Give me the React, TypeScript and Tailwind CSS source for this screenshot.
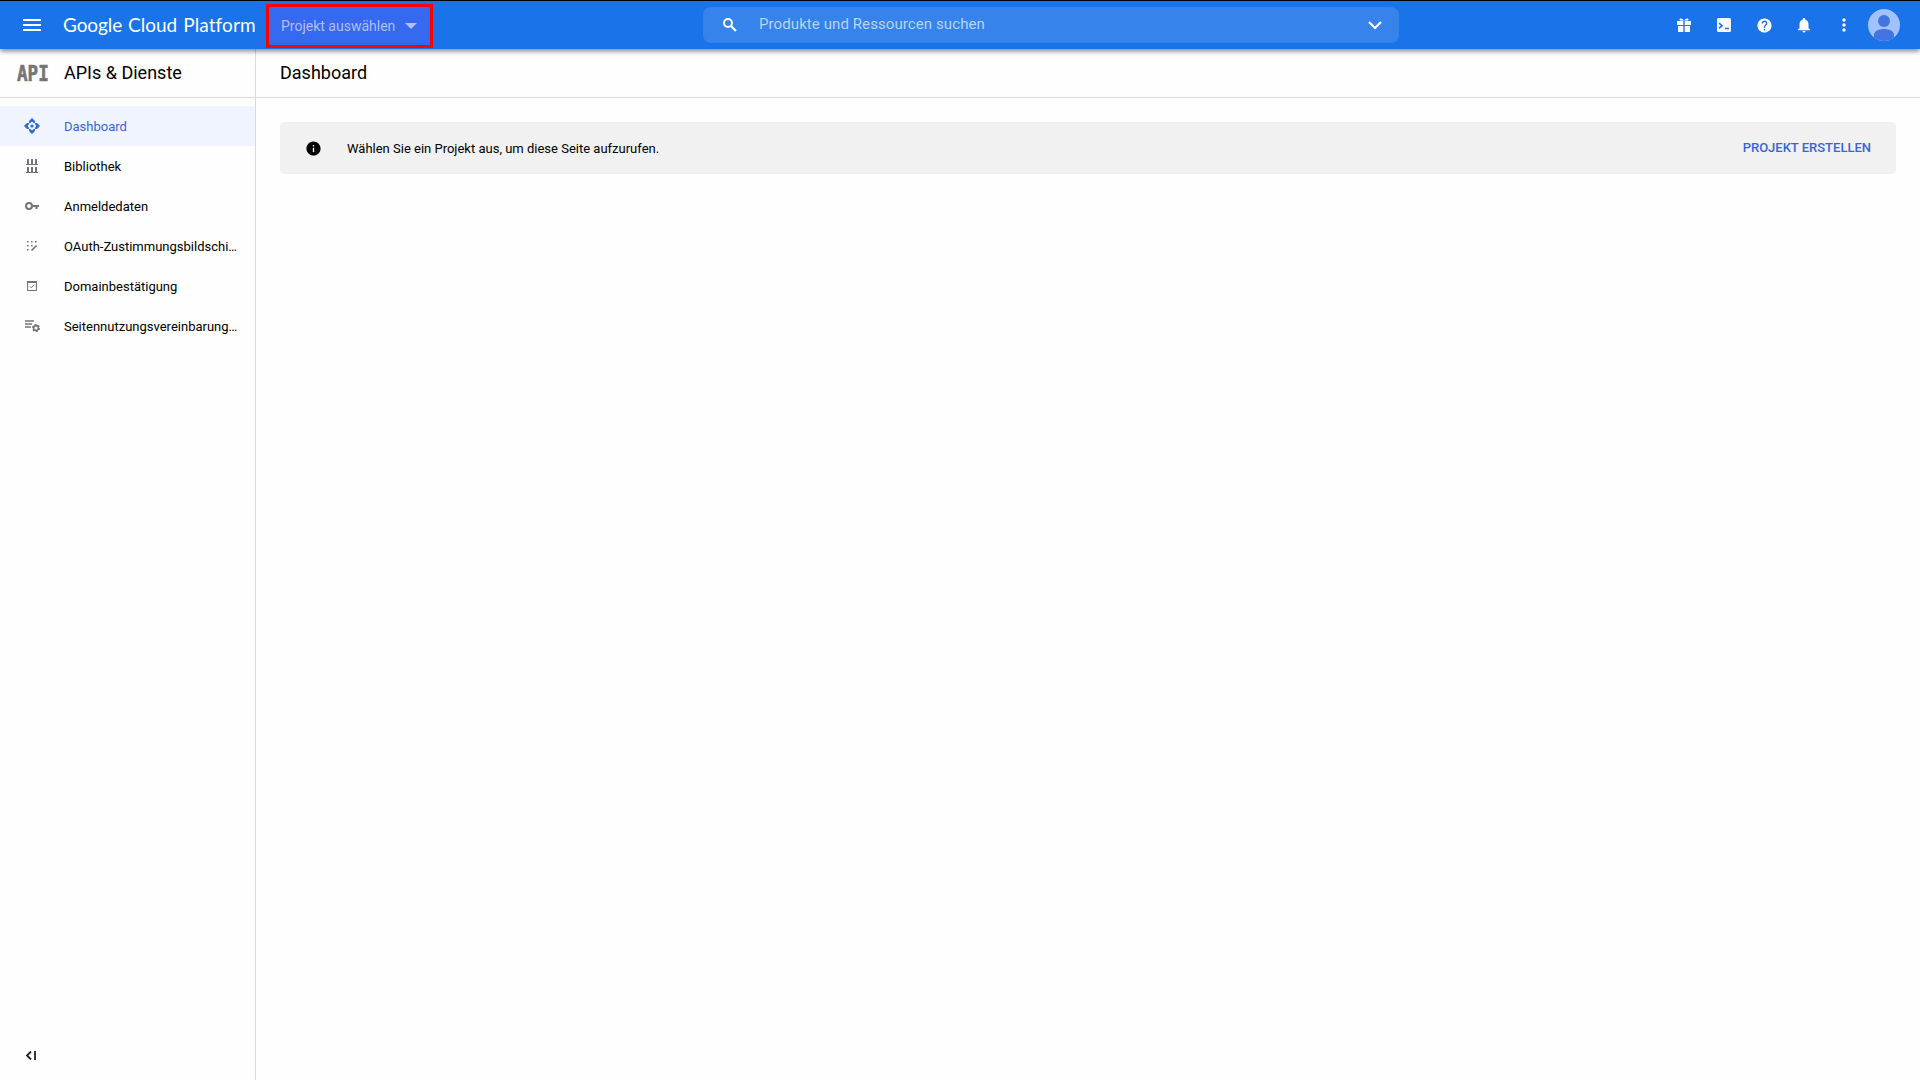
import type { ReactNode } from 'react'
import { MdHelp, MdInfo, MdMenu, MdMoreVert, MdNotifications } from 'react-icons/md'

type NavItem = { label: string; icon: ReactNode; active?: boolean }

function DashboardIcon() {
  return (
    <svg width="16" height="16" viewBox="0 0 16 16" fill="currentColor">
      <circle cx="8" cy="8" r="1.600" />
      <path d="M8 0l3 3v1.700L10 5.200 8 3.600 6 5.200 5 4.700V3zM8 16l3-3v-1.700l-1-.5L8 12.400l-2-1.600-1 .5V13zM0 8l3-3h1.700l.5 1L3.600 8l1.600 2-.5 1H3zM16 8l-3-3h-1.700l-.5 1 1.600 2-1.600 2 .5 1H13z" />
    </svg>
  )
}

function LibraryIcon() {
  return (
    <svg width="12" height="14" viewBox="0 0 12 14" fill="currentColor" shapeRendering="crispEdges">
      <path d="M1 0h2v5h2V0h2v5h2V0h2v5h1v1H0V5h1zM1 8h2v5h2V8h2v5h2V8h2v5h1v1H0v-1h1z" />
    </svg>
  )
}

function KeyIcon() {
  return (
    <svg width="14" height="8" viewBox="0 0 14 8" fill="none" stroke="currentColor" strokeWidth="2">
      <circle cx="4" cy="4" r="3" />
      <path d="M7 4h7M11.500 4v3" />
    </svg>
  )
}

function ConsentIcon() {
  return (
    <svg width="10" height="10" viewBox="0 0 10 10" fill="currentColor">
      <path d="M0 0h1.600v1.600H0zM4 0h1.600v1.600H4zM8 0h1.600v1.600H8zM0 4h1.600v1.600H0zM4 4h1.600v1.600H4zM0 8h1.600v1.600H0z" />
      <path d="M4.500 9.500L9.500 4.500" stroke="currentColor" strokeWidth="1.600" />
    </svg>
  )
}

function DomainIcon() {
  return (
    <svg width="10" height="10" viewBox="0 0 10 10" fill="none" stroke="currentColor">
      <path d="M.5 1v8.500h9V1" strokeWidth="1.200" />
      <path d="M0 1h10" strokeWidth="2" />
      <path d="M2.800 5.300l1.500 1.500 3-3" />
    </svg>
  )
}

function AgreementIcon() {
  return (
    <svg width="15" height="12" viewBox="0 0 15 12" fill="none" stroke="currentColor">
      <path d="M0 1h9M0 4h7M0 7h6" strokeWidth="1.400" />
      <circle cx="11" cy="8" r="2.400" strokeWidth="1.600" />
      <circle cx="11" cy="8" r="3.500" strokeWidth="1.200" strokeDasharray="1.830 1.830" />
    </svg>
  )
}

function SearchIcon() {
  return (
    <svg width="14" height="14" viewBox="0 0 14 14" fill="none" stroke="currentColor" strokeWidth="2">
      <circle cx="5" cy="5" r="4" />
      <path d="M8 8l5 5" strokeWidth="2.200" />
    </svg>
  )
}

function GiftIcon() {
  return (
    <svg width="14" height="14" viewBox="0 0 14 14" fill="currentColor">
      <path d="M0 3h6.300v4H0zM7.700 3H14v4H7.700zM1 8h5.300v6H1zM7.700 8H13v6H7.700z" />
      <path d="M7 3C5.500 0 2.500 0 2.500 1.500S5 2.500 7 2.500s4.500.5 4.500-1S8.500 0 7 3z" />
    </svg>
  )
}

function ShellIcon() {
  return (
    <svg width="14" height="14" viewBox="0 0 14 14" fill="none">
      <rect width="14" height="14" rx="1.500" fill="white" />
      <path d="M2 5l3 2.700-3 2.700M8 10.500h4" stroke="#1a73e8" strokeWidth="1.600" />
    </svg>
  )
}

function Avatar() {
  return (
    <svg width="32" height="32" viewBox="0 0 32 32">
      <circle cx="16" cy="16" r="16" fill="#a0c3ff" />
      <circle cx="16" cy="12" r="6" fill="#4374e0" />
      <path d="M6 28.500V26c0-4 5-6 10-6s10 2 10 6v2.500A16 16 0 0 1 6 28.500z" fill="#4374e0" />
    </svg>
  )
}

const navItems: NavItem[] = [
  { label: 'Dashboard', icon: <DashboardIcon />, active: true },
  { label: 'Bibliothek', icon: <LibraryIcon /> },
  { label: 'Anmeldedaten', icon: <KeyIcon /> },
  { label: 'OAuth-Zustimmungsbildschi…', icon: <ConsentIcon /> },
  { label: 'Domainbestätigung', icon: <DomainIcon /> },
  { label: 'Seitennutzungsvereinbarung…', icon: <AgreementIcon /> },
]

const actions = [
  { name: 'gift', icon: <GiftIcon /> },
  { name: 'shell', icon: <ShellIcon /> },
  { name: 'help', icon: <MdHelp size={17} /> },
  { name: 'notifications', icon: <MdNotifications size={18} /> },
  { name: 'more', icon: <MdMoreVert size={20} /> },
]

function Header() {
  return (
    <header className="relative z-10 flex h-[49px] items-center border-t border-black bg-[#1a73e8] text-white shadow-[0_2px_5px_rgba(0,0,0,0.5)]">
      <button type="button" className="flex w-16 justify-center">
        <MdMenu size={24} />
      </button>
      <div className="-ml-px flex w-[203px] gap-[6px] whitespace-nowrap font-['Lato',sans-serif] text-[19px] leading-6">
        <span className="tracking-[-0.1px]">Google</span>
        <span>Cloud</span>
        <span className="tracking-[0.1px]">Platform</span>
      </div>
      <div className="mt-[2px] h-11 w-[167px] border-[3px] border-[#ff0000]">
        <button
          type="button"
          className="flex h-9 w-full items-center rounded-[3px] bg-[#3569f0] pl-3 pt-[2px] text-sm text-[#b4bdfb]"
        >
          Projekt auswählen
          <svg width="12" height="6" viewBox="0 0 12 6" className="ml-[10px]" fill="currentColor">
            <path d="M0 0h12L6 6z" />
          </svg>
        </button>
      </div>
      <div className="ml-[270px] flex h-9 w-[696px] items-center rounded-lg bg-[#3583eb] pl-5 pr-[17px]">
        <SearchIcon />
        <span className="ml-[22px] flex-1 pb-[2px] text-[15px] tracking-[0.09px] text-[#b8d3f8]">
          Produkte und Ressourcen suchen
        </span>
        <svg width="14" height="9" viewBox="0 0 14 9" fill="none" stroke="currentColor" strokeWidth="2.200">
          <path d="M1 1l6 6 6-6" />
        </svg>
      </div>
      <div className="ml-auto flex items-center pr-5">
        {actions.map((a) => (
          <button key={a.name} type="button" className="flex w-10 justify-center">
            {a.icon}
          </button>
        ))}
        <div className="ml-1">
          <Avatar />
        </div>
      </div>
    </header>
  )
}

function Sidebar() {
  return (
    <aside className="flex w-64 shrink-0 flex-col border-r border-[#dadada]">
      <div className="flex h-[49px] items-center border-b border-[#dadada]">
        <div className="flex w-16 justify-center pl-px pt-px">
          <span className="scale-x-[0.8] font-['DejaVu_Sans_Mono',monospace] text-[22px] font-bold leading-none text-[#757575] [-webkit-text-stroke:0.6px_#757575]">
            API
          </span>
        </div>
        <h2 className="text-lg">APIs &amp; Dienste</h2>
      </div>
      <nav className="flex-1 pt-2">
        {navItems.map((item) => (
          <a
            key={item.label}
            className={`flex h-10 items-center text-[13px] ${item.active ? 'bg-[#f0f4ff] text-[#3367d6]' : ''}`}
          >
            <span className={`flex w-16 shrink-0 justify-center ${item.active ? '' : 'text-[#757575]'}`}>
              {item.icon}
            </span>
            <span className="whitespace-nowrap pt-[2px]">{item.label}</span>
          </a>
        ))}
      </nav>
      <button type="button" className="flex h-[50px] w-[62px] items-center justify-center">
        <svg width="10" height="9" viewBox="0 0 10 9" fill="none" stroke="#212121" strokeWidth="1.800">
          <path d="M5 .5l-4 4 4 4M9 0v9" />
        </svg>
      </button>
    </aside>
  )
}

export default function App() {
  return (
    <div className="flex h-screen flex-col overflow-hidden bg-[#fefefe] font-['Roboto',sans-serif] text-black">
      <Header />
      <div className="flex min-h-0 flex-1">
        <Sidebar />
        <main className="min-w-0 flex-1">
          <div className="flex h-[49px] items-center border-b border-[#dadada] pl-6">
            <h1 className="text-lg">Dashboard</h1>
          </div>
          <div className="mx-6 mt-6 flex h-13 items-center rounded bg-[#f1f1f1] pl-[25px] pr-[25px] text-[13px]">
            <MdInfo size={17} />
            <p className="ml-[25px] flex-1 pt-[2px]">Wählen Sie ein Projekt aus, um diese Seite aufzurufen.</p>
            <button type="button" className="font-medium text-[#3367d6]">
              PROJEKT ERSTELLEN
            </button>
          </div>
        </main>
      </div>
    </div>
  )
}
